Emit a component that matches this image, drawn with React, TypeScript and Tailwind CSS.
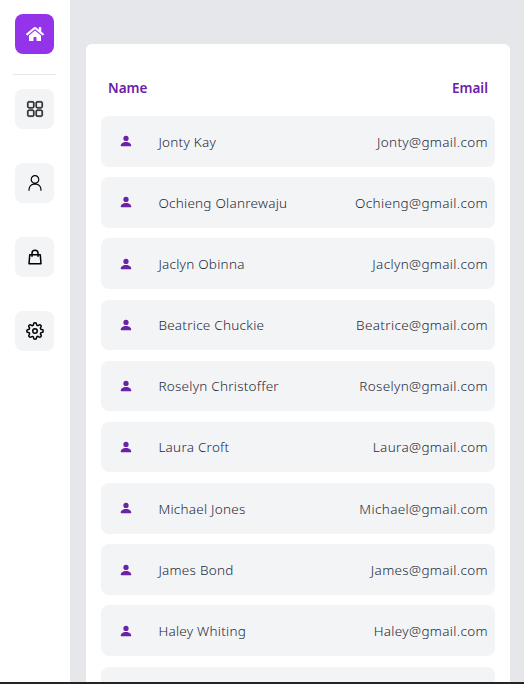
import { FaHome } from "react-icons/fa";
import { RxDashboard, RxPerson } from "react-icons/rx";
import { HiOutlineShoppingBag } from "react-icons/hi";
import { FiSettings } from "react-icons/fi";
import { BsPersonFill } from "react-icons/bs";

const names = ["Jonty Kay", "Ochieng Olanrewaju", "Jaclyn Obinna", "Beatrice Chuckie", "Roselyn Christoffer", "Laura Croft", "Michael Jones", "James Bond", "Haley Whiting"];
const navIcons = [
  { Icon: RxDashboard, tone: "text-[#18181b] [&_path]:stroke-current [&_path]:[stroke-width:0.25]" },
  { Icon: RxPerson, tone: "text-black" },
  { Icon: HiOutlineShoppingBag, tone: "text-black" },
  { Icon: FiSettings, tone: "text-black" },
];

export default function App() {
  return (
    <div className="flex h-[684px] w-[524px] flex-col overflow-hidden bg-gray-200 font-['Noto_Sans',sans-serif]">
      <div className="flex min-h-0 flex-1 overflow-hidden">
        <aside className="flex w-[70px] shrink-0 flex-col items-center bg-white pt-3.5 pr-px">
          <div className="flex h-10 w-[39px] items-center justify-center rounded-lg bg-[#9333ea] pl-px text-white">
            <FaHome size={18} />
          </div>
          <div className="mt-5 h-px w-[43px] bg-gray-200" />
          <nav className="mt-3.5 flex flex-col gap-[34px]">
            {navIcons.map(({ Icon, tone }, i) => (
              <div key={i} className="flex h-10 w-[39px] items-center justify-center rounded-lg bg-[#f3f4f6] pl-px">
                <Icon size={18} className={tone} />
              </div>
            ))}
          </nav>
        </aside>
        <main className="ml-4 mr-3.5 mt-11 flex h-[700px] flex-1 flex-col rounded-t-md bg-white px-[15px] pt-8">
          <div className="flex h-6 items-center justify-between px-[7px] text-[13.5px] font-semibold text-[#6b21a8]">
            <span>Name</span>
            <span>Email</span>
          </div>
          <ul className="mt-[16.05px] flex flex-col gap-[10.68px]">
            {names.map((name) => (
              <li key={name} className="flex h-[50.5px] shrink-0 items-center justify-between rounded-lg bg-[#f3f4f6] pr-[7px] text-[13.5px] font-light tracking-[0.25px] text-gray-800">
                <div className="flex items-center">
                  <BsPersonFill size={14} className="ml-[18px] text-[#6b21a8]" />
                  <span className="ml-[25.4px] pt-[0.7px]">{name}</span>
                </div>
                <span className="pt-[0.7px] tracking-[0.35px]">{name.split(" ")[0]}@gmail.com</span>
              </li>
            ))}
            <li className="h-[50.5px] shrink-0 rounded-lg bg-[#f3f4f6]" />
          </ul>
        </main>
      </div>
      <div className="h-0.5 shrink-0 bg-[#242424]" />
    </div>
  );
}
